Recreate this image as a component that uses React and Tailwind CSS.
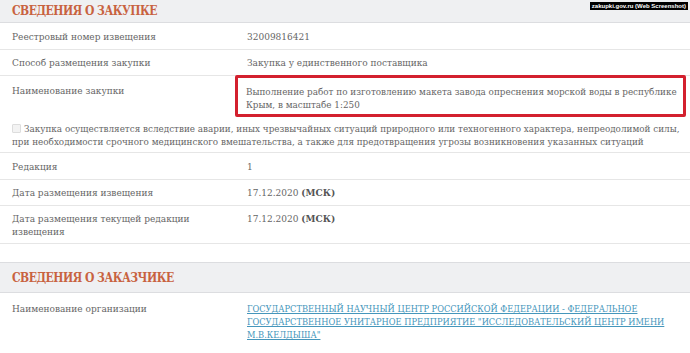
import React from 'react';

const Row = ({ label, children, className = '' }) => (
  <div className={`flex border-b border-[#e6e6e6] ${className}`}>
    <div className="w-[235px] shrink-0 pl-3 pr-2">{label}</div>
    <div className="flex-1 pl-3 pr-2">{children}</div>
  </div>
);

const SectionTitle = ({ children, className = '' }) => (
  <div className={`bg-[#eff0f2] border-y border-[#dcdde0] px-3 text-[#c8623f] font-bold text-[12px] tracking-[-0.5px] ${className}`}>
    {children}
  </div>
);

export default function App() {
  return (
    <div className="relative w-[690px] h-[353px] overflow-hidden bg-white text-[#666] text-[10px] leading-[13px] font-['DejaVu_Serif_Condensed','DejaVu_Serif',serif] font-stretch-condensed">
      <div className="absolute right-[2px] top-[2px] bg-black text-white font-bold text-[6px] leading-[8px] px-[2px] font-['Liberation_Sans',sans-serif] font-stretch-normal">
        zakupki.gov.ru (Web Screenshot)
      </div>

      <SectionTitle className="border-t-0 h-[23px] pt-[2px] leading-[18px]">СВЕДЕНИЯ О ЗАКУПКЕ</SectionTitle>

      <Row label="Реестровый номер извещения" className="h-[27px] items-center">32009816421</Row>
      <Row label="Способ размещения закупки" className="h-[26px] items-center">Закупка у единственного поставщика</Row>
      <div className="flex h-[42px]">
        <div className="w-[235px] shrink-0 pl-3 pr-2 pt-[8px]">Наименование закупки</div>
        <div className="flex-1 pr-1 mt-[-1px]">
          <div className="border-[3px] border-[#d3202e] rounded-[2px] h-[42px] pl-[8px] pr-1 pt-[7px] whitespace-nowrap text-[9.8px]">
            Выполнение работ по изготовлению макета завода опреснения морской воды в республике
            <br />
            Крым, в масштабе 1:250
          </div>
        </div>
      </div>

      <div className="border-b border-[#e6e6e6] h-[35px] pl-3 pr-1 pt-[4px] whitespace-nowrap text-[9.8px]">
        <span className="inline-block w-[9px] h-[9px] border border-[#ddd] bg-[#f3f3f3] rounded-[1px] mr-[3px] align-[-1px]"></span>
        Закупка осуществляется вследствие аварии, иных чрезвычайных ситуаций природного или техногенного характера, непреодолимой силы,
        <br />
        при необходимости срочного медицинского вмешательства, а также для предотвращения угрозы возникновения указанных ситуаций
      </div>

      <Row label="Редакция" className="h-[27px] items-center">1</Row>
      <Row label="Дата размещения извещения" className="h-[26px] items-center">
        17.12.2020 <b className="text-[#555]">(МСК)</b>
      </Row>
      <div className="flex border-b border-[#e6e6e6] h-[38px] pt-[6px]">
        <div className="w-[235px] shrink-0 pl-3 pr-2">Дата размещения текущей редакции<br />извещения</div>
        <div className="flex-1 pl-3 pr-2">
          17.12.2020 <b className="text-[#555]">(МСК)</b>
        </div>
      </div>

      <div className="h-[18px]"></div>

      <SectionTitle className="h-[31px] pt-[6px] leading-[18px]">СВЕДЕНИЯ О ЗАКАЗЧИКЕ</SectionTitle>

      <div className="flex pt-[9px]">
        <div className="w-[235px] shrink-0 pl-3 pr-2">Наименование организации</div>
        <div className="flex-1 pl-3 pr-2 whitespace-nowrap text-[9.2px]">
          <a href="#" className="text-[#4596bb] underline">
            ГОСУДАРСТВЕННЫЙ НАУЧНЫЙ ЦЕНТР РОССИЙСКОЙ ФЕДЕРАЦИИ - ФЕДЕРАЛЬНОЕ
            <br />
            ГОСУДАРСТВЕННОЕ УНИТАРНОЕ ПРЕДПРИЯТИЕ "ИССЛЕДОВАТЕЛЬСКИЙ ЦЕНТР ИМЕНИ
            <br />
            М.В.КЕЛДЫША"
          </a>
        </div>
      </div>
    </div>
  );
}
